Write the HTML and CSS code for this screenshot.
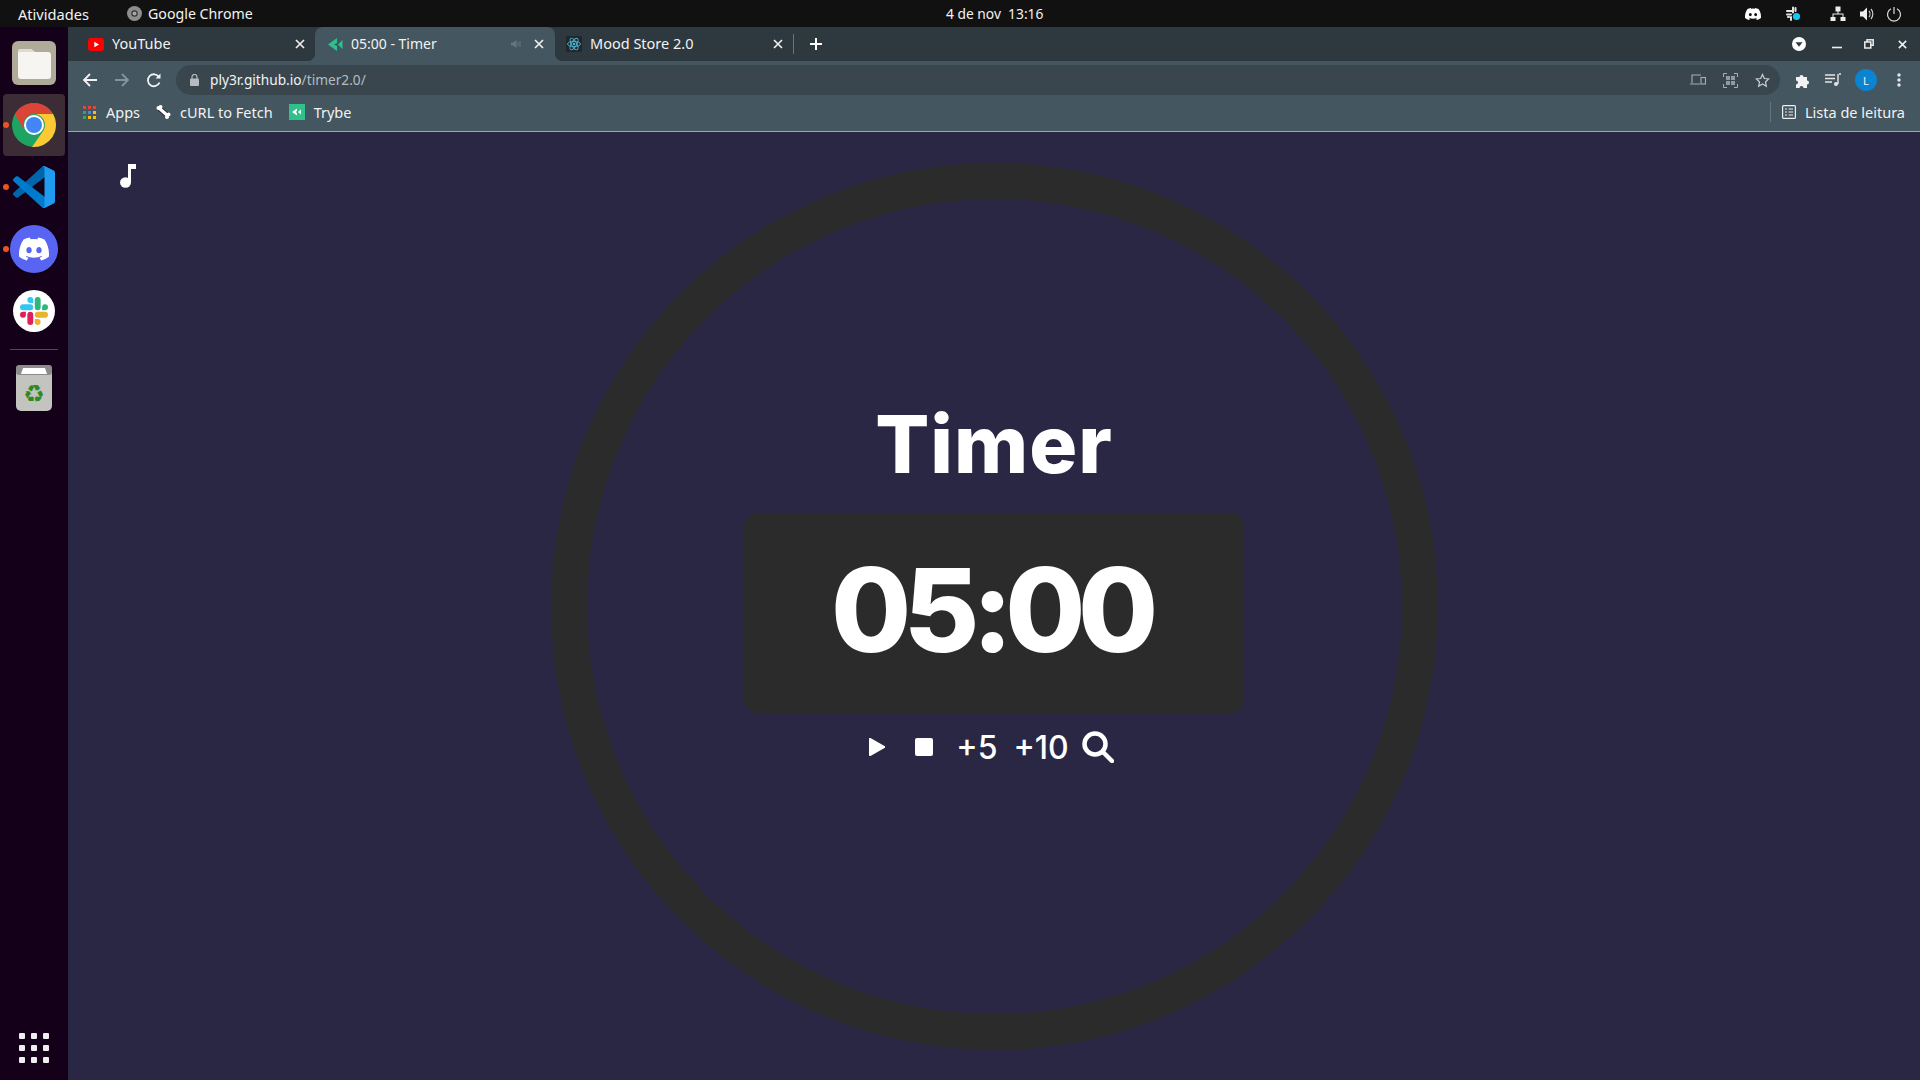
FILE: index.html
```html
<!DOCTYPE html>
<html lang="pt-BR">
<head>
    <meta charset="utf-8">
    <title>05:00 - Timer</title>
    <link rel="stylesheet" href="styles.css">
</head>
<body>
    <svg class="defs" width="0" height="0">
        <symbol id="discord" viewBox="0 0 24 24"><path d="M20.317 4.37a19.791 19.791 0 0 0-4.885-1.515.074.074 0 0 0-.079.037c-.21.375-.444.864-.608 1.25a18.27 18.27 0 0 0-5.487 0 12.64 12.64 0 0 0-.617-1.25.077.077 0 0 0-.079-.037A19.736 19.736 0 0 0 3.677 4.37a.07.07 0 0 0-.032.027C.533 9.046-.32 13.58.099 18.057a.082.082 0 0 0 .031.057 19.9 19.9 0 0 0 5.993 3.03.078.078 0 0 0 .084-.028 14.09 14.09 0 0 0 1.226-1.994.076.076 0 0 0-.041-.106 13.107 13.107 0 0 1-1.872-.892.077.077 0 0 1-.008-.128 10.2 10.2 0 0 0 .372-.292.074.074 0 0 1 .077-.01c3.928 1.793 8.18 1.793 12.062 0a.074.074 0 0 1 .078.01c.12.098.246.198.373.292a.077.077 0 0 1-.006.127 12.299 12.299 0 0 1-1.873.892.077.077 0 0 0-.041.107c.36.698.772 1.362 1.225 1.993a.076.076 0 0 0 .084.028 19.839 19.839 0 0 0 6.002-3.03.077.077 0 0 0 .032-.054c.5-5.177-.838-9.674-3.549-13.66a.061.061 0 0 0-.031-.03zM8.02 15.33c-1.183 0-2.157-1.085-2.157-2.419 0-1.333.956-2.419 2.157-2.419 1.21 0 2.176 1.096 2.157 2.42 0 1.333-.956 2.418-2.157 2.418zm7.975 0c-1.183 0-2.157-1.085-2.157-2.419 0-1.333.955-2.419 2.157-2.419 1.21 0 2.176 1.096 2.157 2.42 0 1.333-.946 2.418-2.157 2.418z"/></symbol>
        <symbol id="slack" viewBox="0 0 24 24">
            <path fill="#e01e5a" d="M5.042 15.165a2.528 2.528 0 0 1-2.52 2.523A2.528 2.528 0 0 1 0 15.165a2.527 2.527 0 0 1 2.522-2.52h2.52v2.52zM6.313 15.165a2.527 2.527 0 0 1 2.521-2.52 2.527 2.527 0 0 1 2.521 2.52v6.313A2.528 2.528 0 0 1 8.834 24a2.528 2.528 0 0 1-2.521-2.522v-6.313z"/>
            <path fill="#36c5f0" d="M8.834 5.042a2.528 2.528 0 0 1-2.521-2.52A2.528 2.528 0 0 1 8.834 0a2.528 2.528 0 0 1 2.521 2.522v2.52H8.834zM8.834 6.313a2.528 2.528 0 0 1 2.521 2.521 2.528 2.528 0 0 1-2.521 2.521H2.522A2.528 2.528 0 0 1 0 8.834a2.528 2.528 0 0 1 2.522-2.521h6.312z"/>
            <path fill="#2eb67d" d="M18.956 8.834a2.528 2.528 0 0 1 2.522-2.521A2.528 2.528 0 0 1 24 8.834a2.528 2.528 0 0 1-2.522 2.521h-2.522V8.834zM17.688 8.834a2.528 2.528 0 0 1-2.523 2.521 2.527 2.527 0 0 1-2.52-2.521V2.522A2.527 2.527 0 0 1 15.165 0a2.528 2.528 0 0 1 2.523 2.522v6.312z"/>
            <path fill="#ecb22e" d="M15.165 18.956a2.528 2.528 0 0 1 2.523 2.522A2.528 2.528 0 0 1 15.165 24a2.527 2.527 0 0 1-2.52-2.522v-2.522h2.52zM15.165 17.688a2.527 2.527 0 0 1-2.52-2.523 2.526 2.526 0 0 1 2.52-2.52h6.313A2.527 2.527 0 0 1 24 15.165a2.528 2.528 0 0 1-2.522 2.523h-6.313z"/>
        </symbol>
        <symbol id="close" viewBox="0 0 12 12"><path d="M2 2l8 8M10 2l-8 8" fill="none" stroke="currentColor" stroke-width="1.7"/></symbol>
    </svg>

    <header class="topbar">
        <div class="topbar-left">
            <span class="activities">Atividades</span>
            <svg class="app-icon" width="15" height="15" viewBox="0 0 15 15"><circle cx="7.5" cy="7.5" r="7.5" fill="#8e8e8e"/><circle cx="7.5" cy="7.5" r="3.2" fill="#333"/><circle cx="7.5" cy="7.5" r="2" fill="#a8a8a8"/></svg>
            <span>Google Chrome</span>
        </div>
        <span class="clock">4 de nov&nbsp;&nbsp;13:16</span>
        <div class="tray">
            <svg class="tray-discord" width="16" height="16" fill="#fff"><use href="#discord"/></svg>
            <svg class="tray-slack" width="16" height="16" viewBox="0 0 16 16">
                <path d="M1 5h5M7 1.5v5M1 8.500h4M9.500 2v3M5 11v3M2 11h1" stroke="#e4e4e4" stroke-width="2" stroke-linecap="round" fill="none"/>
                <circle cx="10.500" cy="10.500" r="3.600" fill="#12c9f5"/>
            </svg>
            <svg class="tray-net" width="16" height="16" viewBox="0 0 16 16" fill="#eee"><rect x="5.500" y="0.500" width="5" height="5"/><rect x="0.500" y="11" width="5" height="4"/><rect x="10.500" y="11" width="5" height="4"/><path d="M7.500 5h1v2.500h5V11h-1V8.500h-9V11h-1V7.500h5z"/></svg>
            <svg class="tray-vol" width="16" height="16" viewBox="0 0 16 16" fill="#eee"><path d="M1 5.500h3L8 1.500v13l-4-4H1z"/><path d="M10 5c1.300 1.600 1.300 4.400 0 6M12 3c2.400 2.800 2.400 7.200 0 10" fill="none" stroke="#ccc" stroke-width="1.200"/></svg>
            <svg class="tray-power" width="16" height="16" viewBox="0 0 16 16" fill="none" stroke="#ddd" stroke-width="1.200"><path d="M8 1v7"/><path d="M5 2.800a6.500 6.500 0 1 0 6 0"/></svg>
        </div>
    </header>

    <div class="desktop">
        <nav class="dock">
            <div class="dock-item">
                <svg width="44" height="44" viewBox="0 0 44 44"><rect width="44" height="44" rx="6" fill="#b0aa98"/><path d="M6 11a3 3 0 0 1 3-3h10l4 3h13a3 3 0 0 1 3 3v21a3 3 0 0 1-3 3H9a3 3 0 0 1-3-3z" fill="#f6f5f2"/><path d="M6 11a3 3 0 0 1 3-3h10l4 3z" fill="#dedbd2"/></svg>
            </div>
            <div class="dock-item active running">
                <svg width="44" height="44" viewBox="0 0 44 44">
                    <circle cx="22" cy="22" r="22" fill="#1da462"/>
                    <path d="M22 11H41.050A22 22 0 0 0 2.950 11L12.500 27.500A11 11 0 0 1 22 11z" fill="#db4437"/>
                    <path d="M22 11H41.050A22 22 0 0 1 20 43.900L31.500 27.500A11 11 0 0 0 22 11z" fill="#fcc934"/>
                    <circle cx="22" cy="22" r="10" fill="#fff"/>
                    <circle cx="22" cy="22" r="8" fill="#4285f4"/>
                </svg>
            </div>
            <div class="dock-item running">
                <svg width="42" height="42" viewBox="0 0 100 100">
                    <path fill="#0065a9" d="M96.4614 10.7962L75.8569 0.875542C73.4719 -0.272773 70.6217 0.211611 68.75 2.08333L1.29858 63.5832C-0.515693 65.2373 -0.513607 68.0937 1.30308 69.7452L6.81272 74.754C8.29793 76.1042 10.5347 76.2036 12.1338 74.9905L93.3609 13.3699C96.086 11.3026 100 13.2462 100 16.6667V16.4275C100 14.0265 98.6246 11.8378 96.4614 10.7962Z"/>
                    <path fill="#007acc" d="M96.4614 89.2038L75.8569 99.1245C73.4719 100.273 70.6217 99.7884 68.75 97.9167L1.29858 36.4169C-0.515693 34.7627 -0.513607 31.9063 1.30308 30.2548L6.81272 25.246C8.29793 23.8958 10.5347 23.7964 12.1338 25.0095L93.3609 86.6301C96.086 88.6974 100 86.7538 100 83.3334V83.5726C100 85.9735 98.6246 88.1622 96.4614 89.2038Z"/>
                    <path fill="#1f9cf0" d="M75.8578 99.1263C73.4721 100.274 70.6219 99.7885 68.75 97.9166C71.0564 100.223 75 98.5895 75 95.3278V4.67213C75 1.41039 71.0564 -0.223106 68.75 2.08329C70.6219 0.211402 73.4721 -0.273666 75.8578 0.873633L96.4587 10.7807C98.6234 11.8217 100 14.0112 100 16.4132V83.5871C100 85.9891 98.6234 88.1786 96.4586 89.2196L75.8578 99.1263Z"/>
                </svg>
            </div>
            <div class="dock-item running">
                <div class="discord-badge"><svg width="30" height="30" fill="#fff"><use href="#discord"/></svg></div>
            </div>
            <div class="dock-item">
                <div class="slack-badge"><svg width="28" height="28"><use href="#slack"/></svg></div>
            </div>
            <div class="dock-sep"></div>
            <div class="dock-trash">
                <svg width="36" height="46" viewBox="0 0 36 46">
                    <rect width="36" height="46" rx="5" fill="#c3c3c0"/>
                    <rect width="36" height="10" rx="3" fill="#8c8c8a"/>
                    <path d="M5 9l2-6h22l2 6z" fill="#fff"/>
                    <text class="recycle" x="18" y="37" text-anchor="middle">♻</text>
                </svg>
            </div>
            <div class="dock-grid"><i></i><i></i><i></i><i></i><i></i><i></i><i></i><i></i><i></i></div>
        </nav>

        <div class="browser">
            <div class="tabstrip">
                <div class="tab tab-first">
                    <svg class="favicon" width="16" height="13" viewBox="0 0 16 13"><rect width="16" height="13" rx="3" fill="#f00"/><path d="M6.300 3.800v5.400L11 6.500z" fill="#fff"/></svg>
                    <span class="tab-title">YouTube</span>
                    <svg class="tab-close" width="12" height="12"><use href="#close"/></svg>
                </div>
                <div class="tab tab-active">
                    <svg class="favicon" width="15" height="15" viewBox="0 0 15 15" fill="#2fc18c"><path d="M0 7.500L9 1v5L6 7.500 9 9v5zM10 7.500L14.500 3v9z"/></svg>
                    <span class="tab-title title-active">05:00 - Timer</span>
                    <svg class="tab-audio" width="10" height="10" viewBox="0 0 10 10" fill="#66767f"><path d="M0 3.500h2L5.500 1v8L2 6.500H0z"/><path d="M7 3v4M9 2v6" stroke="#66767f" fill="none"/></svg>
                    <svg class="tab-close" width="12" height="12"><use href="#close"/></svg>
                </div>
                <div class="tab tab-last">
                    <svg class="favicon" width="16" height="16" viewBox="0 0 16 16"><rect width="16" height="16" rx="2" fill="#20262b"/><g fill="none" stroke="#4fb6d2" stroke-width=".9"><ellipse cx="8" cy="8" rx="6.500" ry="2.600"/><ellipse cx="8" cy="8" rx="6.500" ry="2.600" transform="rotate(60 8 8)"/><ellipse cx="8" cy="8" rx="6.500" ry="2.600" transform="rotate(120 8 8)"/></g><circle cx="8" cy="8" r="1.300" fill="#4fb6d2"/></svg>
                    <span class="tab-title">Mood Store 2.0</span>
                    <svg class="tab-close" width="12" height="12"><use href="#close"/></svg>
                </div>
                <div class="tab-sep"></div>
                <svg class="new-tab" width="14" height="14" viewBox="0 0 14 14"><path d="M7 1v12M1 7h12" stroke="#fff" stroke-width="2"/></svg>
                <div class="window-btns">
                    <svg class="tabs-menu" width="14" height="14" viewBox="0 0 14 14"><circle cx="7" cy="7" r="7" fill="#fff"/><path d="M3.500 5.300h7L7 9.800z" fill="#2e383f"/></svg>
                    <svg class="win-min" width="10" height="10" viewBox="0 0 10 10"><path d="M0 8.500h10" stroke="#eee" stroke-width="1.600"/></svg>
                    <svg class="win-max" width="10" height="10" viewBox="0 0 10 10" fill="none" stroke="#eee" stroke-width="1.500"><rect x="3" y=".8" width="6.200" height="5.400"/><rect x=".8" y="3" width="6" height="6" fill="#2e383f"/></svg>
                    <svg class="win-close" width="11" height="11" viewBox="0 0 12 12"><use href="#close"/></svg>
                </div>
            </div>

            <div class="toolbar">
                <svg class="nav-btn" width="16" height="16" viewBox="0 0 16 16" fill="none" stroke="#f2f2f2" stroke-width="1.800"><path d="M15 8H2M8 2L2 8l6 6"/></svg>
                <svg class="nav-btn" width="16" height="16" viewBox="0 0 16 16" fill="none" stroke="#85939b" stroke-width="1.800"><path d="M1 8h13M8 2l6 6-6 6"/></svg>
                <svg class="nav-btn" width="16" height="16" viewBox="0 0 16 16" fill="none" stroke="#f2f2f2" stroke-width="1.800"><path d="M13.500 10.500a6 6 0 1 1-.5-5.500"/><path d="M14.500 1.500v5h-5z" fill="#f2f2f2" stroke="none"/></svg>
                <div class="omnibox">
                    <svg class="lock" width="9" height="12" viewBox="0 0 9 12"><rect y="4.500" width="9" height="7.500" rx="1" fill="#b4bcc1"/><path d="M2 5V3a2.500 2.500 0 0 1 5 0v2" fill="none" stroke="#b4bcc1" stroke-width="1.200"/></svg>
                    <span class="url">ply3r.github.io<span class="url-path">/timer2.0/</span></span>
                    <div class="omni-icons">
                        <svg width="16" height="12" viewBox="0 0 16 12" fill="none" stroke="#a6b0b6" stroke-width="1.100"><path d="M2 9V1h9M0 10h10"/><rect x="11" y="3.500" width="4.500" height="6.500"/></svg>
                        <svg width="15" height="15" viewBox="0 0 15 15"><rect x="3" y="3" width="9" height="9" fill="#a6b0b6" opacity=".8"/><path d="M7.500 3v9M3 7.500h9" stroke="#39464e"/><path d="M.5 4V.5H4M11 .5h3.500V4M14.500 11v3.500H11M4 14.500H.5V11" fill="none" stroke="#a6b0b6"/></svg>
                        <svg width="15" height="15" viewBox="0 0 24 24" fill="none" stroke="#c6cdd1" stroke-width="2"><path d="M12 2.500l2.900 6.300 6.900.8-5.100 4.700 1.400 6.800-6.100-3.400-6.100 3.400 1.400-6.800-5.100-4.700 6.900-.8z"/></svg>
                    </div>
                </div>
                <div class="tool-icons">
                    <svg width="15" height="15" viewBox="0 0 15 15" fill="#f2f2f2"><path d="M1 4h3.500a2 2 0 1 1 4 0H12v3.500a2 2 0 1 1 0 4V15H8.500a2 2 0 1 0-4 0H1v-3.500a2 2 0 1 0 0-4z"/></svg>
                    <svg width="16" height="14" viewBox="0 0 16 14" fill="none" stroke="#e6e6e6" stroke-width="1.400"><path d="M0 2h10M0 5.500h10M0 9h7"/><path d="M14 1h2M13 1v10"/><circle cx="11" cy="11" r="2" fill="#e6e6e6" stroke="none"/></svg>
                    <span class="avatar">L</span>
                    <svg class="tool-dots" width="4" height="14" viewBox="0 0 4 14" fill="#e6e6e6"><circle cx="2" cy="2" r="1.700"/><circle cx="2" cy="7" r="1.700"/><circle cx="2" cy="12" r="1.700"/></svg>
                </div>
            </div>

            <div class="bookmarks">
                <span class="bookmark">
                    <svg class="apps-grid" width="13" height="13" viewBox="0 0 13 13"><rect width="3" height="3" fill="#ea4335"/><rect x="5" width="3" height="3" fill="#ea4335"/><rect x="10" width="3" height="3" fill="#ea4335"/><rect y="5" width="3" height="3" fill="#34a853"/><rect x="5" y="5" width="3" height="3" fill="#4285f4"/><rect x="10" y="5" width="3" height="3" fill="#fbbc05"/><rect y="10" width="3" height="3" fill="#34a853"/><rect x="5" y="10" width="3" height="3" fill="#fbbc05"/><rect x="10" y="10" width="3" height="3" fill="#fbbc05"/></svg>
                    Apps
                </span>
                <span class="bookmark">
                    <svg width="15" height="14" viewBox="0 0 15 14">
                        <path d="M3 3l9 8" stroke="#111" stroke-width="5"/>
                        <path d="M3 3l9 8" stroke="#fff" stroke-width="3.500"/>
                        <circle cx="2.500" cy="3" r="2" fill="#fff"/><circle cx="4.500" cy="2" r="2" fill="#fff"/><circle cx="12.500" cy="9.500" r="2" fill="#fff"/><circle cx="11" cy="12" r="2" fill="#fff"/>
                    </svg>
                    cURL to Fetch
                </span>
                <span class="bookmark">
                    <svg width="16" height="16" viewBox="0 0 16 16"><rect width="16" height="16" fill="#2fc18c"/><path d="M3 8l5-3.500v2.500L6.500 8 8 9v2.500zM9 8l3-2.500v5z" fill="#fff"/></svg>
                    Trybe
                </span>
                <span class="reading-list">
                    <svg width="14" height="14" viewBox="0 0 14 14" fill="none" stroke="#eee" stroke-width="1.200"><rect x=".6" y=".6" width="12.800" height="12.800" rx="1"/><path d="M3 4h2M6.500 4H11M3 7h2M6.500 7H11M3 10h2M6.500 10H11"/></svg>
                    Lista de leitura
                </span>
            </div>

            <main class="page">
                <svg class="music" width="16" height="24" viewBox="0 0 16 24" fill="#fff"><ellipse cx="5.500" cy="18.500" rx="5.500" ry="5.200"/><rect x="8" y="0" width="3" height="18"/><rect x="8" y="0" width="8" height="5"/></svg>
                <section class="ring">
                    <h1 class="title">Timer</h1>
                    <div class="display">05:00</div>
                    <div class="controls">
                        <svg class="ctl-play" width="16" height="18" viewBox="0 0 16 18" fill="#fff"><path d="M1.500 0L15.500 8a1 1 0 0 1 0 2L1.500 18A1 1 0 0 1 0 17V1A1 1 0 0 1 1.500 0z"/></svg>
                        <span class="ctl-stop"></span>
                        <span class="ctl-add add-five">+5</span>
                        <span class="ctl-add add-ten">+10</span>
                        <svg class="ctl-search" width="32" height="32" viewBox="0 0 32 32" fill="none" stroke="#fff"><circle cx="13" cy="13" r="10.500" stroke-width="4.500"/><path d="M21 21l9 9" stroke-width="4.500" stroke-linecap="round"/></svg>
                    </div>
                </section>
            </main>
        </div>
    </div>
</body>
</html>
```

FILE: styles.css
```css
* {
    box-sizing: border-box;
}

html, body {
    height: 100%;
}

body {
    margin: 0;
    display: flex;
    flex-direction: column;
    overflow: hidden;
    background-color: #15001a;
    color: #f2f2f2;
    font: 14px "Noto Sans", sans-serif;
}

svg {
    display: block;
    flex: none;
}

.defs {
    position: absolute;
}

/* ubuntu top bar */
.topbar {
    display: flex;
    align-items: center;
    height: 27px;
    flex: none;
    background-color: #111;
    font-size: 14.2px;
}

.topbar-left {
    display: flex;
    align-items: center;
    width: 946px;
    padding-left: 18px;
}

.activities {
    width: 109px;
    font-size: 14.6px;
}

.app-icon {
    margin-right: 6px;
}

.clock {
    font-size: 13.8px;
}

.tray {
    display: flex;
    align-items: center;
    margin-left: auto;
    padding-right: 18px;
}

.tray-slack {
    margin-left: 25px;
}

.tray-net {
    margin-left: 28px;
}

.tray-vol {
    margin-left: 13px;
}

.tray-power {
    margin-left: 11px;
}

.desktop {
    display: flex;
    flex: 1;
    min-height: 0;
}

/* dock */
.dock {
    display: flex;
    flex-direction: column;
    align-items: center;
    width: 68px;
    flex: none;
    padding-top: 5px;
}

.dock-item {
    position: relative;
    display: flex;
    align-items: center;
    justify-content: center;
    width: 62px;
    height: 62px;
    flex: none;
    border-radius: 4px;
}

.dock-item.active {
    background-color: #3c2c35;
}

.dock-item.running::before {
    content: "";
    position: absolute;
    left: 0;
    top: 28px;
    width: 6px;
    height: 6px;
    border-radius: 50%;
    background-color: #e95420;
}

.discord-badge, .slack-badge {
    display: flex;
    align-items: center;
    justify-content: center;
    border-radius: 50%;
}

.discord-badge {
    width: 48px;
    height: 48px;
    background-color: #5865f2;
}

.slack-badge {
    width: 42px;
    height: 42px;
    background-color: #fff;
}

.dock-sep {
    width: 48px;
    height: 1px;
    margin-top: 7px;
    background-color: #55485a;
    flex: none;
}

.dock-trash {
    margin-top: 15px;
}

.recycle {
    font: 24px "DejaVu Sans", sans-serif;
    fill: #2c8a22;
}

.dock-grid {
    display: grid;
    grid-template-columns: repeat(3, 6px);
    gap: 6px;
    margin-top: auto;
    margin-bottom: 17px;
}

.dock-grid i {
    height: 6px;
    border-radius: 1px;
    background-color: #eee;
}

/* chrome */
.browser {
    display: flex;
    flex-direction: column;
    flex: 1;
    min-width: 0;
}

.tabstrip {
    display: flex;
    align-items: center;
    height: 34px;
    flex: none;
    background-color: #2e383f;
    font-size: 14.5px;
}

.tab {
    display: flex;
    align-items: center;
    height: 34px;
    width: 240px;
    flex: none;
}

.tab-first {
    width: 247px;
    padding: 0 9px 0 20px;
}

.tab-active {
    position: relative;
    padding: 0 10px 0 13px;
    background-color: #445660;
    border-radius: 8px 8px 0 0;
}

.tab-active::before, .tab-active::after {
    content: "";
    position: absolute;
    bottom: 0;
    width: 8px;
    height: 8px;
}

.tab-active::before {
    left: -8px;
    background: radial-gradient(circle at 0 0, transparent 8px, #445660 8.5px);
}

.tab-active::after {
    right: -8px;
    background: radial-gradient(circle at 100% 0, transparent 8px, #445660 8.5px);
}

.tab-last {
    width: 238px;
    padding: 0 9px 0 11px;
}

.favicon {
    margin-right: 8px;
}

.tab-title {
    flex: 1;
    margin-bottom: 2px;
    white-space: nowrap;
}

.title-active {
    font-size: 14px;
}

.tab-audio {
    margin-right: 12px;
}

.tab-close {
    color: #eee;
}

.tab-sep {
    width: 1px;
    height: 20px;
    background-color: #66747c;
}

.new-tab {
    margin-left: 15px;
}

.window-btns {
    display: flex;
    align-items: center;
    margin-left: auto;
    padding-right: 12px;
    color: #eee;
}

.win-min {
    margin-left: 26px;
}

.win-max {
    margin-left: 22px;
}

.win-close {
    margin-left: 23px;
}

.toolbar {
    display: flex;
    align-items: center;
    height: 34px;
    flex: none;
    gap: 16px;
    padding: 4px 14px 0 14px;
    background-color: #445660;
}

.omnibox {
    display: flex;
    align-items: center;
    flex: none;
    width: 1604px;
    height: 30px;
    margin-left: -2px;
    padding: 0 10px 0 14px;
    border-radius: 15px;
    background-color: #39464e;
    font-size: 13.7px;
}

.lock {
    margin-right: 11px;
}

.url {
    margin-bottom: 1px;
}

.url-path {
    color: #b3bcc1;
}

.omni-icons {
    display: flex;
    align-items: center;
    gap: 17px;
    margin-left: auto;
}

.tool-icons {
    display: flex;
    align-items: center;
    gap: 15px;
    margin-left: -1px;
}

.tool-dots {
    margin-left: 5px;
}

.avatar {
    display: flex;
    align-items: center;
    justify-content: center;
    width: 22px;
    height: 22px;
    margin-left: -1px;
    border-radius: 50%;
    background-color: #0a84d0;
    font-size: 11px;
}

.bookmarks {
    display: flex;
    align-items: center;
    gap: 16px;
    height: 37px;
    flex: none;
    padding: 0 15px 2px 15px;
    background-color: #445660;
    border-bottom: 1px solid #9aa7b0;
    font-size: 14.5px;
}

.bookmark {
    display: flex;
    align-items: center;
    gap: 9px;
}

.bookmark:first-child {
    gap: 10px;
}

.reading-list {
    display: flex;
    align-items: center;
    gap: 9px;
    margin-left: auto;
    padding-left: 11px;
    border-left: 1px solid #66747c;
}

/* the timer page */
.page {
    position: relative;
    display: flex;
    align-items: center;
    justify-content: center;
    flex: 1;
    min-height: 0;
    background-color: #2a2744;
    font-family: Inter, sans-serif;
}

.music {
    position: absolute;
    left: 52px;
    top: 32px;
}

.ring {
    display: flex;
    flex-direction: column;
    align-items: center;
    justify-content: center;
    width: 887px;
    height: 887px;
    flex: none;
    padding-bottom: 54px;
    border: 36px solid #2b2b2b;
    border-radius: 50%;
}

.title {
    margin: 0 0 21px;
    font-size: 80px;
    font-weight: 800;
    line-height: 97px;
    letter-spacing: 1px;
    color: #fff;
}

.display {
    display: flex;
    align-items: center;
    justify-content: center;
    width: 500px;
    height: 200px;
    padding: 0 6px 6px 0;
    border-radius: 14px;
    background-color: #2b2b2b;
    color: #fff;
    font-size: 116px;
    font-weight: 800;
    letter-spacing: -7.5px;
}

.controls {
    display: flex;
    align-items: center;
    height: 32px;
    margin-top: 18px;
    margin-right: 5px;
    color: #fff;
    font-size: 32px;
    font-weight: 500;
}

.ctl-stop {
    width: 18px;
    height: 18px;
    margin-left: 30px;
    border-radius: 2px;
    background-color: #fff;
}

.add-five {
    margin-left: 23px;
}

.add-ten {
    margin-left: 16px;
}

.ctl-search {
    margin-left: 13px;
}
```
